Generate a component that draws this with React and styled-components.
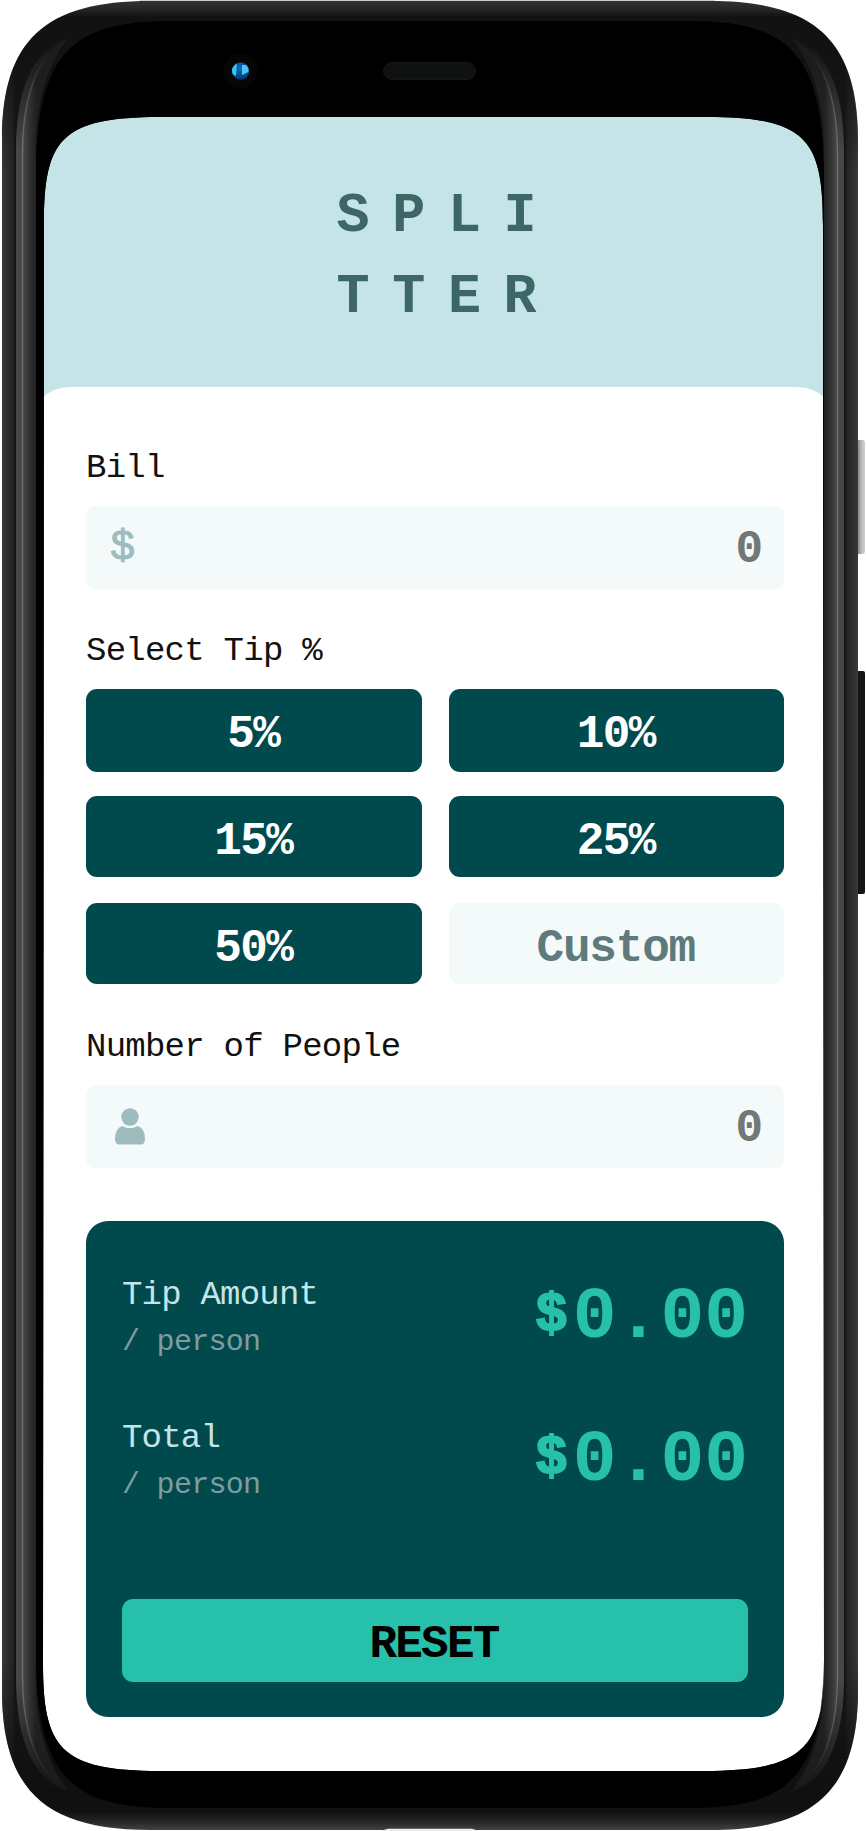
import React from "react";
import styled, { createGlobalStyle } from "styled-components";

const GlobalStyle = createGlobalStyle`
  *, *::before, *::after { box-sizing: border-box; }
  body {
    margin: 0;
    background: #fff;
    font-family: "Liberation Mono", "DejaVu Sans Mono", monospace;
  }
  button { font: inherit; border: 0; margin: 0; padding: 0; cursor: pointer; }
`;

const Phone = styled.main`
  position: relative;
  width: 866px;
  height: 1831px;
  padding: 117px 42px 60px 43px;
  overflow: hidden;
`;

const PhoneFrame = styled.svg`
  position: absolute;
  inset: 0;
  pointer-events: none;
`;

const Screen = styled.div`
  height: 1654px;
  overflow: hidden;
  background: #c5e4e7;
`;

const Header = styled.header`
  height: 270px;
  padding-top: 60px;
  display: flex;
  justify-content: center;
`;

const Title = styled.h1`
  margin: 0;
  width: 200px;
  padding-left: 3px;
  font-size: 55px;
  font-weight: 700;
  line-height: 80.5px;
  letter-spacing: 22.7px;
  color: #3d6666;
  white-space: nowrap;
`;

const Card = styled.section`
  height: 1384px;
  margin: 0 -14px;
  padding: 46px 54px 0 57px;
  border-radius: 41px 41px 0 0;
  background: #fff;
`;

const Label = styled.h2`
  margin: 0 0 9px;
  height: 64px;
  font-size: 34px;
  font-weight: 400;
  line-height: 70px;
  letter-spacing: -0.75px;
  color: #111;
  white-space: pre;
`;

const Field = styled.div`
  width: 698px;
  height: 83px;
  margin-bottom: 27px;
  padding: 0 22px 0 24px;
  display: flex;
  align-items: center;
  justify-content: space-between;
  border-radius: 9px;
  background: #f4fafa;
`;

const Currency = styled.span`
  padding-top: 2px;
  font-size: 42px;
  line-height: 83px;
  color: #9ebbbd;
  -webkit-text-stroke: 1px #9ebbbd;
`;

const FieldValue = styled.span`
  padding-top: 5px;
  font-size: 46px;
  font-weight: 700;
  line-height: 83px;
  margin-right: -1px;
  color: #727777;
`;

const PersonIcon = styled.svg`
  width: 30px;
  height: 37px;
  margin-left: 5px;
  fill: #9ebbbd;
`;

const TipGrid = styled.div`
  width: 698px;
  height: 295px;
  margin-bottom: 28px;
  display: grid;
  grid-template-columns: 1fr 1fr;
  grid-auto-rows: 81px;
  column-gap: 27px;
  row-gap: 26px;
`;

const TipButton = styled.button`
  height: ${(p) => (p.$tall ? "83px" : "81px")};
  padding: ${(p) => (p.$tall ? "9px" : "11px")} 1px 0 0;
  border-radius: 11px;
  background: ${(p) => (p.$custom ? "#f4fafa" : "#00494d")};
  color: ${(p) => (p.$custom ? "#5e7a7d" : "#fff")};
  font-size: 46px;
  font-weight: 700;
  line-height: 70px;
  letter-spacing: ${(p) => (p.$custom ? "-1.2px" : "-1.6px")};
`;

const Results = styled.section`
  width: 698px;
  height: 496px;
  margin-top: 53px;
  padding: 44px 36px 35px;
  display: flex;
  flex-direction: column;
  border-radius: 22px;
  background: #00494d;
`;

const ResultRow = styled.div`
  height: 143px;
  display: flex;
  justify-content: space-between;
`;

const ResultName = styled.div`
  font-size: 34px;
  line-height: 60px;
  letter-spacing: -0.78px;
  color: #c5e4e7;
`;

const ResultUnit = styled.div`
  font-size: 30px;
  line-height: 34px;
  letter-spacing: -0.7px;
  color: #7f9c9f;
`;

const Amount = styled.div`
  padding-top: 7px;
  display: flex;
  align-items: flex-start;
  font-size: 73px;
  font-weight: 700;
  line-height: 92px;
  color: #26c0ab;
`;

const AmountSign = styled.span`
  font-size: 54px;
  margin-right: 5px;
  line-height: 88px;
  -webkit-text-stroke: 2px #26c0ab;
`;

const ResetButton = styled.button`
  height: 83px;
  margin-top: auto;
  padding: 8px 2px 0 0;
  border-radius: 11px;
  background: #26c0ab;
  color: #000;
  font-size: 46px;
  font-weight: 700;
  line-height: 70px;
  letter-spacing: -1.8px;
`;

function Rail({ transform }) {
  return (
    <g transform={transform}>
      <path d="M0 916 V0 H60 V40 C30 64 15 95 15 150 V916Z" fill="url(#edge)" mask="url(#cornerFade)" />
      <path d="M16 916 V150 C16 84 36 48 68 37 C42 58 22 88 22 150 V916Z" fill="url(#groove)" />
      <path d="M22 916 V150 C22 88 42 50 68 38 C50 64 37 90 36 150 V916Z" fill="url(#bevel)" mask="url(#bevelFade)" />
      <path d="M22.5 916 V150 C22.5 105 34 72 48 55" fill="none" stroke="url(#shine)" strokeWidth="1.3" />
    </g>
  );
}

const SCREEN_PATH =
  "M44 225 C44 140 60 117 160 117 H707 C807 117 823 140 823 225 L824 1663 C824 1748 804 1771 704 1771 H160 C60 1771 43 1748 43 1663 Z";
const BODY_PATH =
  "M2 140 C2 40 45 1 150 1 H710 C815 1 858 40 858 140 V1690 C858 1790 815 1830 710 1830 H150 C45 1830 2 1790 2 1690 Z";

function Frame() {
  return (
    <PhoneFrame width="866" height="1831" viewBox="0 0 866 1831" aria-hidden="true">
      <defs>
        <linearGradient id="shell" x1="0" y1="0" x2="0" y2="1831" gradientUnits="userSpaceOnUse">
          <stop offset="0" stopColor="#333" />
          <stop offset="0.005" stopColor="#262626" />
          <stop offset="0.009" stopColor="#121212" />
          <stop offset="0.989" stopColor="#101010" />
          <stop offset="0.994" stopColor="#222" />
          <stop offset="1" stopColor="#444" />
        </linearGradient>
        <linearGradient id="edge" x1="2" y1="0" x2="15" y2="0" gradientUnits="userSpaceOnUse">
          <stop offset="0" stopColor="#3a3a3a" />
          <stop offset="0.3" stopColor="#303030" />
          <stop offset="0.8" stopColor="#262626" />
          <stop offset="1" stopColor="#181818" />
        </linearGradient>
        <linearGradient id="groove" x1="0" y1="37" x2="0" y2="150" gradientUnits="userSpaceOnUse">
          <stop offset="0" stopColor="#121212" />
          <stop offset="0.5" stopColor="#2c2c2c" />
          <stop offset="1" stopColor="#474747" />
        </linearGradient>
        <linearGradient id="bevel" x1="22" y1="0" x2="36" y2="0" gradientUnits="userSpaceOnUse">
          <stop offset="0" stopColor="#4d4d4d" />
          <stop offset="0.5" stopColor="#333" />
          <stop offset="1" stopColor="#202020" />
        </linearGradient>
        <linearGradient id="shine" x1="0" y1="55" x2="0" y2="150" gradientUnits="userSpaceOnUse">
          <stop offset="0" stopColor="#777" stopOpacity="0" />
          <stop offset="1" stopColor="#707070" />
        </linearGradient>
        <linearGradient id="fadeRamp" x1="0" y1="35" x2="0" y2="170" gradientUnits="userSpaceOnUse">
          <stop offset="0" stopColor="#000" />
          <stop offset="1" stopColor="#fff" />
        </linearGradient>
        <linearGradient id="bevelRamp" x1="0" y1="30" x2="0" y2="90" gradientUnits="userSpaceOnUse">
          <stop offset="0" stopColor="#999" />
          <stop offset="1" stopColor="#fff" />
        </linearGradient>
        <mask id="cornerFade" maskUnits="userSpaceOnUse" x="0" y="0" width="80" height="920">
          <rect width="80" height="920" fill="url(#fadeRamp)" />
        </mask>
        <mask id="bevelFade" maskUnits="userSpaceOnUse" x="0" y="0" width="80" height="920">
          <rect width="80" height="920" fill="url(#bevelRamp)" />
        </mask>
        <clipPath id="body">
          <path d={BODY_PATH} />
        </clipPath>
        <linearGradient id="power" x1="857" y1="0" x2="865" y2="0" gradientUnits="userSpaceOnUse">
          <stop offset="0" stopColor="#777" />
          <stop offset="0.4" stopColor="#aaa" />
          <stop offset="0.8" stopColor="#ccc" />
          <stop offset="1" stopColor="#888" />
        </linearGradient>
        <radialGradient id="lens" cx="0.5" cy="0.35" r="0.65">
          <stop offset="0" stopColor="#0870bd" />
          <stop offset="1" stopColor="#03356f" />
        </radialGradient>
      </defs>
      <rect x="855" y="440" width="9.5" height="114" rx="2" fill="url(#power)" />
      <rect x="855" y="671" width="10" height="223" rx="2" fill="#151515" />
      {/* The shell is painted with the display area left open. */}
      <path fillRule="evenodd" fill="url(#shell)" d={`${BODY_PATH} ${SCREEN_PATH}`} />
      <path
        fillRule="evenodd"
        fill="#000"
        d={`M36 170 C38 55 70 21 170 21 H690 C790 21 822 55 824 170 V1660 C822 1775 790 1808 690 1808 H170 C70 1808 38 1775 36 1660 Z ${SCREEN_PATH}`}
      />
      <g clipPath="url(#body)">
        <Rail />
        <Rail transform="translate(860 0) scale(-1 1)" />
        <Rail transform="translate(0 1829) scale(1 -1)" />
        <Rail transform="translate(860 1829) scale(-1 -1)" />
      </g>
      <path d="M140 0.5 H715" stroke="#c8cdca" />
      <path d="M380 1831 L388 1828.7 H472 L479 1831Z" fill="#eee" />
      <circle cx="240.5" cy="71" r="17" fill="#060606" />
      <circle cx="240.5" cy="71" r="8.7" fill="url(#lens)" />
      <path d="M237 63.5 Q232 66 232 71 Q232 75 236 76Z" fill="#31c5f2" />
      <path d="M242 65 H246 Q249 68 248.5 72 L242 75Z" fill="#4ac6f5" />
      <rect x="383.5" y="62.5" width="92" height="17" rx="8.5" fill="#101212" stroke="#161616" />
    </PhoneFrame>
  );
}

const TIPS = ["5%", "10%", "15%", "25%", "50%"];

function Result({ name }) {
  return (
    <ResultRow>
      <div>
        <ResultName>{name}</ResultName>
        <ResultUnit>/ person</ResultUnit>
      </div>
      <Amount>
        <AmountSign>$</AmountSign>
        <span>0.00</span>
      </Amount>
    </ResultRow>
  );
}

export default function App() {
  return (
    <>
      <GlobalStyle />
      <Phone>
        <Screen>
          <Header>
            <Title>
              SPLI
              <br />
              TTER
            </Title>
          </Header>
          <Card>
            <Label>Bill</Label>
            <Field>
              <Currency>$</Currency>
              <FieldValue>0</FieldValue>
            </Field>
            <Label>Select Tip %</Label>
            <TipGrid>
              {TIPS.map((tip, i) => (
                <TipButton key={tip} $tall={i < 2}>
                  {tip}
                </TipButton>
              ))}
              <TipButton $custom>Custom</TipButton>
            </TipGrid>
            <Label>Number of People</Label>
            <Field>
              <PersonIcon viewBox="0 0 30 37">
                <circle cx="15" cy="9" r="8.7" />
                <path d="M7.5 18 Q15 22.5 22.5 18 Q30 20 30 31 Q30 36.5 25.5 36.5 H4.5 Q0 36.5 0 31 Q0 20 7.5 18Z" />
              </PersonIcon>
              <FieldValue>0</FieldValue>
            </Field>
            <Results>
              <Result name="Tip Amount" />
              <Result name="Total" />
              <ResetButton>RESET</ResetButton>
            </Results>
          </Card>
        </Screen>
        <Frame />
      </Phone>
    </>
  );
}
